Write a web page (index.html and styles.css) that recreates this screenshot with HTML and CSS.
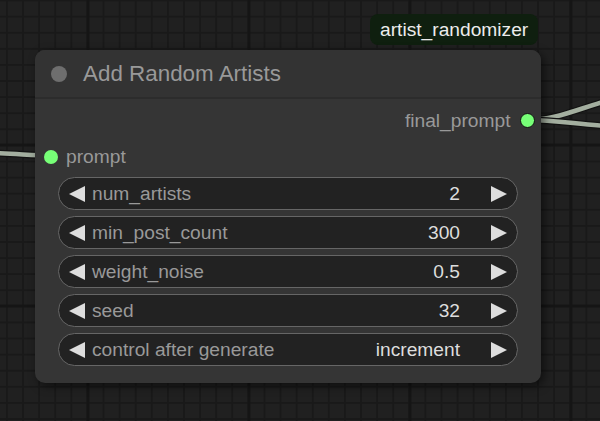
FILE: index.html
```html
<!DOCTYPE html>
<html>
<head>
<meta charset="utf-8">
<link rel="stylesheet" href="styles.css">
</head>
<body>
<div class="canvas">
  <svg class="links" width="600" height="421" viewBox="0 0 600 421">
    <path class="link-outline" d="M-10,153 C10,153.5 30,155 51,155.7"/>
    <path class="link" d="M-10,153 C10,153.5 30,155 51,155.7"/>
    <path class="link-outline" d="M527,120 C555,120 575,110 606,101"/>
    <path class="link" d="M527,120 C555,120 575,110 606,101"/>
    <path class="link-outline" d="M527,120 C555,120 575,124 606,126"/>
    <path class="link" d="M527,120 C555,120 575,124 606,126"/>
  </svg>

  <div class="badge">artist_randomizer</div>

  <div class="node">
    <div class="node-title">
      <span class="title-dot"></span>
      <span class="title-text">Add Random Artists</span>
    </div>
    <div class="node-body">
      <div class="slot slot-out">
        <span class="slot-label">final_prompt</span>
        <span class="slot-dot out-dot"></span>
      </div>
      <div class="slot slot-in">
        <span class="slot-dot in-dot"></span>
        <span class="slot-label">prompt</span>
      </div>
      <div class="widgets">
        <div class="widget">
          <svg class="arrow" viewBox="0 0 16 16"><polygon points="0,8 16,0 16,16"/></svg>
          <span class="w-label">num_artists</span>
          <span class="w-value">2</span>
          <svg class="arrow arrow-r" viewBox="0 0 16 16"><polygon points="16,8 0,0 0,16"/></svg>
        </div>
        <div class="widget">
          <svg class="arrow" viewBox="0 0 16 16"><polygon points="0,8 16,0 16,16"/></svg>
          <span class="w-label">min_post_count</span>
          <span class="w-value">300</span>
          <svg class="arrow arrow-r" viewBox="0 0 16 16"><polygon points="16,8 0,0 0,16"/></svg>
        </div>
        <div class="widget">
          <svg class="arrow" viewBox="0 0 16 16"><polygon points="0,8 16,0 16,16"/></svg>
          <span class="w-label">weight_noise</span>
          <span class="w-value">0.5</span>
          <svg class="arrow arrow-r" viewBox="0 0 16 16"><polygon points="16,8 0,0 0,16"/></svg>
        </div>
        <div class="widget">
          <svg class="arrow" viewBox="0 0 16 16"><polygon points="0,8 16,0 16,16"/></svg>
          <span class="w-label">seed</span>
          <span class="w-value">32</span>
          <svg class="arrow arrow-r" viewBox="0 0 16 16"><polygon points="16,8 0,0 0,16"/></svg>
        </div>
        <div class="widget">
          <svg class="arrow" viewBox="0 0 16 16"><polygon points="0,8 16,0 16,16"/></svg>
          <span class="w-label">control after generate</span>
          <span class="w-value">increment</span>
          <svg class="arrow arrow-r" viewBox="0 0 16 16"><polygon points="16,8 0,0 0,16"/></svg>
        </div>
      </div>
    </div>
  </div>
</div>
</body>
</html>
```

FILE: styles.css
```css
* { box-sizing: border-box; }

html, body {
  margin: 0;
  padding: 0;
}

body {
  width: 600px;
  height: 421px;
  overflow: hidden;
  font-family: "Liberation Sans", Arial, sans-serif;
}

.canvas {
  position: relative;
  width: 600px;
  height: 421px;
  background-color: #202020;
  background-image:
    linear-gradient(90deg, #151515 0 3px, transparent 3px),
    linear-gradient(0deg, #151515 0 3px, transparent 3px),
    linear-gradient(90deg, #191919 0 2px, transparent 2px),
    linear-gradient(0deg, #191919 0 2px, transparent 2px);
  background-size: 161px 100%, 100% 161px, 16.1px 100%, 100% 16.1px;
  background-position: 86.5px 0, 0 146.5px, 6px 0, 0 1.5px;
}

.links {
  position: absolute;
  left: 0;
  top: 0;
}

.link-outline {
  fill: none;
  stroke: #121212;
  stroke-width: 7;
}

.link {
  fill: none;
  stroke: #a3ae9f;
  stroke-width: 4.5;
}

.badge {
  position: absolute;
  left: 370px;
  top: 14px;
  width: 168px;
  height: 31px;
  padding-left: 10px;
  display: flex;
  align-items: center;
  background: #0f1f0f;
  border-radius: 8px;
  color: #ececec;
  font-size: 19.2px;
}

.node {
  position: absolute;
  left: 35px;
  top: 50px;
  width: 506px;
  height: 333px;
  background: #353535;
  border-radius: 10px;
  box-shadow: 3px 3px 10px rgba(0, 0, 0, 0.55);
}

.node-title {
  height: 49px;
  display: flex;
  align-items: center;
  padding-left: 16px;
  gap: 16px;
  background: #333333;
  border-radius: 10px 10px 0 0;
  border-bottom: 2px solid #2c2c2c;
}

.title-dot {
  width: 16px;
  height: 16px;
  border-radius: 50%;
  background: #6e6e6e;
}

.title-text {
  color: #999999;
  font-size: 22.4px;
}

.node-body {
  padding-top: 3.5px;
}

.slot {
  height: 36px;
  display: flex;
  align-items: center;
  font-size: 19.2px;
  color: #999999;
}

.slot-out {
  justify-content: flex-end;
  padding-right: 6.5px;
  gap: 9px;
}

.slot-in {
  padding-left: 9px;
  gap: 8px;
}

.slot-dot {
  border-radius: 50%;
  background: #77ff77;
}

.out-dot {
  width: 15px;
  height: 15px;
  border: 1.5px solid #111;
}

.in-dot {
  width: 14px;
  height: 14px;
}

.widgets {
  margin: 2.5px 23px 0;
  display: flex;
  flex-direction: column;
  gap: 6.6px;
}

.widget {
  height: 32.5px;
  display: flex;
  align-items: center;
  padding: 1.5px 10px 0;
  background: #222222;
  border: 1.5px solid #666666;
  border-radius: 17px;
  font-size: 19.2px;
}

.arrow {
  width: 16px;
  height: 16px;
  fill: #dddddd;
  flex: none;
}

.arrow-r {
  margin-left: 31px;
}

.w-label {
  flex: 1;
  margin-left: 7px;
  color: #999999;
}

.w-value {
  color: #dddddd;
}
```
